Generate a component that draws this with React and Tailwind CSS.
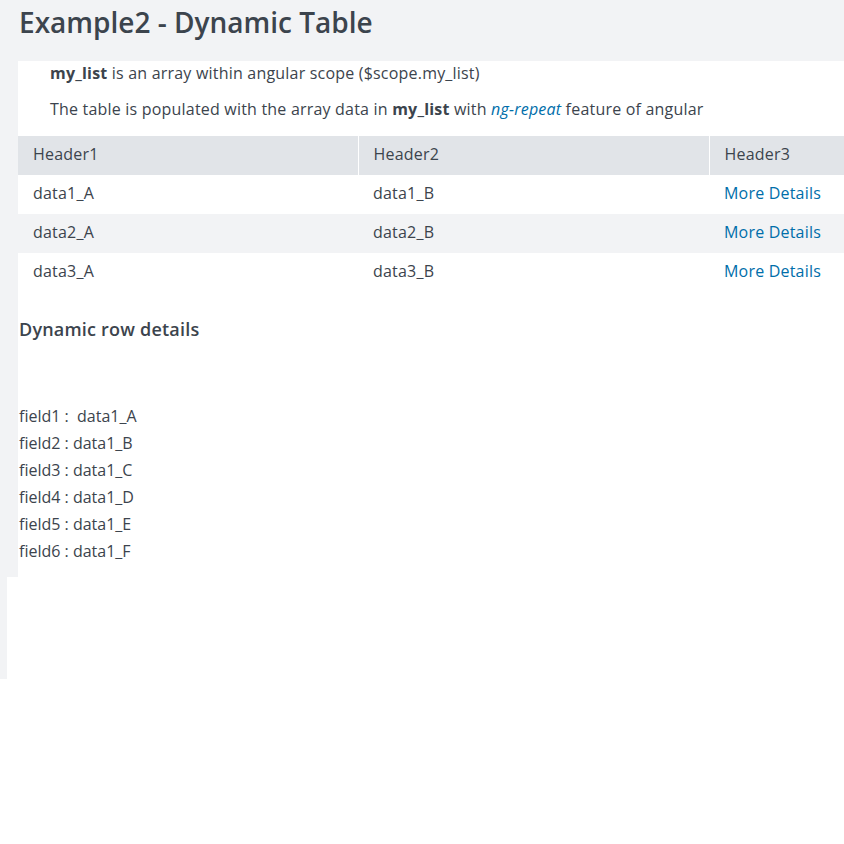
import React from "react";

const rows = [
  ["data1_A", "data1_B"],
  ["data2_A", "data2_B"],
  ["data3_A", "data3_B"],
];

const fields = [
  ["field1", " data1_A"],
  ["field2", "data1_B"],
  ["field3", "data1_C"],
  ["field4", "data1_D"],
  ["field5", "data1_E"],
  ["field6", "data1_F"],
];

export default function App() {
  return (
    <div
      className="bg-[#f2f3f5] pl-[7px] text-[#3c444d] [font-variant-ligatures:none]"
      style={{ fontFamily: "'Open Sans', Lato, sans-serif" }}
    >
      <div className="h-[679px] bg-white">
        <div className="bg-[#f2f3f5] pl-[11px]">
          <h1 className="h-[61px] pl-[1px] pt-[4px] text-[28px] font-semibold leading-[36px]">
            Example2 - Dynamic Table
          </h1>
          <div className="bg-white pb-[12px]">
            <p className="pl-[32px] text-[16px] leading-[24px] tracking-[0.2px]">
              <b>my_list</b> is an array within angular scope ($scope.my_list)
            </p>
            <p className="mt-[12px] pl-[32px] text-[16px] leading-[24px] tracking-[0.2px]">
              The table is populated with the array data in <b>my_list</b> with{" "}
              <i className="text-[#006eaa]">ng-repeat</i> feature of angular
            </p>
            <table className="mt-[15px] w-[840px] border-collapse text-[16px] leading-[24px] tracking-[0.2px]">
              <thead>
                <tr className="bg-[#e1e4e8]">
                  <th className="h-[39px] w-[340px] border-r border-white px-[15px] pb-[4px] text-left font-normal">
                    Header1
                  </th>
                  <th className="h-[39px] w-[351px] border-r border-white px-[15px] pb-[4px] text-left font-normal">
                    Header2
                  </th>
                  <th className="h-[39px] px-[15px] pb-[4px] text-left font-normal">Header3</th>
                </tr>
              </thead>
              <tbody>
                {rows.map((r, i) => (
                  <tr key={i} className={i % 2 ? "bg-[#f2f3f5]" : "bg-white"}>
                    <td className="h-[39px] px-[15px] pb-[4px]">{r[0]}</td>
                    <td className="h-[39px] px-[15px] pb-[4px]">{r[1]}</td>
                    <td className="h-[39px] px-[15px] pb-[4px] text-[#006eaa]">More Details</td>
                  </tr>
                ))}
              </tbody>
            </table>
            <h3 className="mt-[25px] pl-[1px] text-[18px] font-semibold leading-[24px] tracking-[0.2px]">
              Dynamic row details
            </h3>
            <div className="mt-[62px] pl-[1px] text-[16px] leading-[27px]">
              {fields.map(([k, v]) => (
                <div key={k}>
                  {k} :{v === " data1_A" ? "\u00a0 data1_A" : " " + v}
                </div>
              ))}
            </div>
          </div>
        </div>
      </div>
    </div>
  );
}
